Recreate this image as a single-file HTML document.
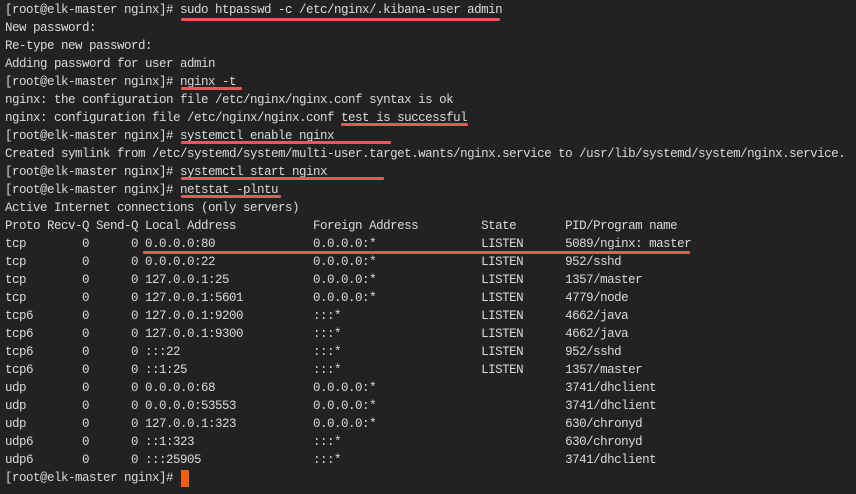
<!DOCTYPE html>
<html><head><meta charset="utf-8"><style>
html,body{margin:0;padding:0;}
body{width:856px;height:494px;background:#222222;position:relative;overflow:hidden;}
pre{position:absolute;left:5px;top:1px;margin:0;font-family:"Liberation Mono",monospace;font-size:12.5px;letter-spacing:-0.5px;line-height:18px;color:#dadada;}
.u{position:absolute;height:3px;background:#e85858;border-radius:1px;}
.cur{position:absolute;left:181px;top:470px;width:8px;height:17px;background:#f06010;}
</style></head><body>
<pre>[root@elk-master nginx]# sudo htpasswd -c /etc/nginx/.kibana-user admin
New password:
Re-type new password:
Adding password for user admin
[root@elk-master nginx]# nginx -t
nginx: the configuration file /etc/nginx/nginx.conf syntax is ok
nginx: configuration file /etc/nginx/nginx.conf test is successful
[root@elk-master nginx]# systemctl enable nginx
Created symlink from /etc/systemd/system/multi-user.target.wants/nginx.service to /usr/lib/systemd/system/nginx.service.
[root@elk-master nginx]# systemctl start nginx
[root@elk-master nginx]# netstat -plntu
Active Internet connections (only servers)
Proto Recv-Q Send-Q Local Address           Foreign Address         State       PID/Program name
tcp        0      0 0.0.0.0:80              0.0.0.0:*               LISTEN      5089/nginx: master
tcp        0      0 0.0.0.0:22              0.0.0.0:*               LISTEN      952/sshd
tcp        0      0 127.0.0.1:25            0.0.0.0:*               LISTEN      1357/master
tcp        0      0 127.0.0.1:5601          0.0.0.0:*               LISTEN      4779/node
tcp6       0      0 127.0.0.1:9200          :::*                    LISTEN      4662/java
tcp6       0      0 127.0.0.1:9300          :::*                    LISTEN      4662/java
tcp6       0      0 :::22                   :::*                    LISTEN      952/sshd
tcp6       0      0 ::1:25                  :::*                    LISTEN      1357/master
udp        0      0 0.0.0.0:68              0.0.0.0:*                           3741/dhclient
udp        0      0 0.0.0.0:53553           0.0.0.0:*                           3741/dhclient
udp        0      0 127.0.0.1:323           0.0.0.0:*                           630/chronyd
udp6       0      0 ::1:323                 :::*                                630/chronyd
udp6       0      0 :::25905                :::*                                3741/dhclient
[root@elk-master nginx]# </pre>
<div class="u" style="left:181px;top:18px;width:319px"></div>
<div class="u" style="left:181px;top:87px;width:61px"></div>
<div class="u" style="left:341px;top:123px;width:127px"></div>
<div class="u" style="left:181px;top:141px;width:210px"></div>
<div class="u" style="left:181px;top:177px;width:203px"></div>
<div class="u" style="left:181px;top:195px;width:100px"></div>
<div class="u" style="left:143px;top:251px;width:547px"></div>
<div class="cur"></div>
</body></html>
